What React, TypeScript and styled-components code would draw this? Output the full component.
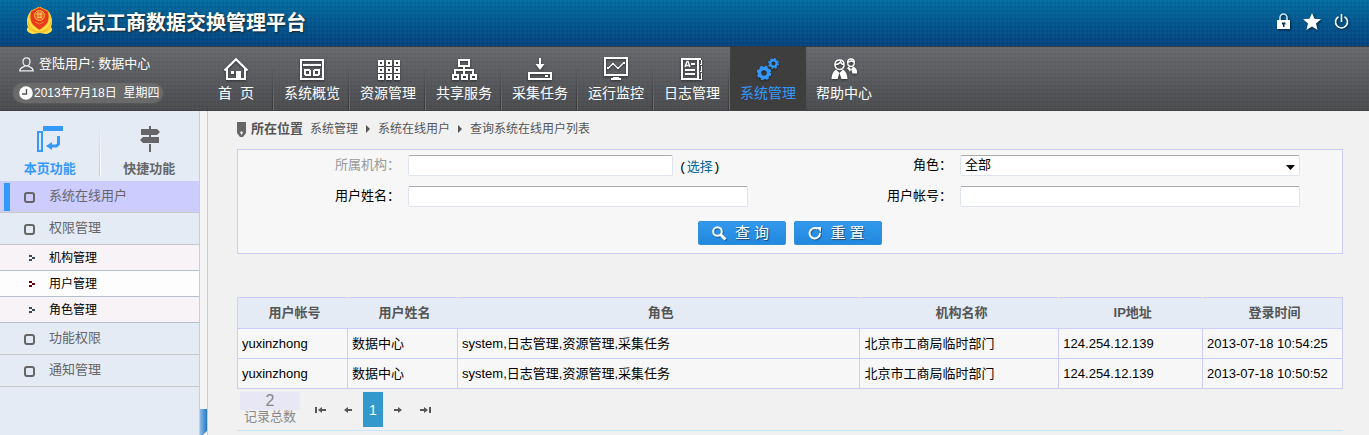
import React from "react";
import styled, { createGlobalStyle, css } from "styled-components";

const GlobalStyle = createGlobalStyle`
  *, *::before, *::after { box-sizing: border-box; }
  body {
    margin: 0;
    background: #f1f1f1;
    color: #000;
    font: 13px/20px "Liberation Sans", Arial, "Noto Sans CJK SC", sans-serif;
  }
  a { color: inherit; text-decoration: none; }
  button, input, select { font: inherit; margin: 0; }
  button { border: 0; padding: 0; background: none; color: inherit; cursor: pointer; }
  svg { display: block; flex: none; }
`;

const dots = css`
  linear-gradient(90deg, rgba(255, 255, 255, 0.02) 2px, transparent 2px) 0 0 / 4px 4px,
  linear-gradient(rgba(255, 255, 255, 0.02) 2px, transparent 2px) 0 0 / 4px 4px
`;

/* ---------- page frame ---------- */

const Page = styled.div`
  display: flex;
  flex-direction: column;
  min-height: 100vh;
`;

const Header = styled.header`
  display: flex;
  align-items: center;
  height: 47px;
  padding: 0 20px 4px 26px;
  border-bottom: 1px solid #38383c;
  background: ${dots}, linear-gradient(#00699d, #00407c);
`;

const Title = styled.h1`
  margin: 0 auto 0 13px;
  padding-top: 3px;
  color: #fff;
  font-size: 20px;
  line-height: 24px;
  font-weight: bold;
  text-shadow: 1px 1px 2px #222;
`;

const HeaderTools = styled.div`
  display: flex;
  gap: 13px;
  color: #fff;
  filter: drop-shadow(1px 1px 1px rgba(0, 0, 0, 0.6));
`;

const NavBar = styled.div`
  display: flex;
  height: 64px;
  background: ${dots}, linear-gradient(#646669, #47494c);
  border-bottom: 1px solid #444;
  color: #fff;
`;

const UserPanel = styled.div`
  width: 198px;
  flex: none;
  padding: 7px 0 0 13px;
`;

const UserLine = styled.div`
  display: flex;
  align-items: center;
  gap: 5px;
  height: 20px;
  padding-left: 6px;
`;

const DateLine = styled.div`
  display: flex;
  align-items: center;
  gap: 1px;
  width: 150px;
  height: 20px;
  margin-top: 9px;
  padding-left: 6px;
  border-radius: 10px;
  background: #6a6a6a;
  box-shadow: 0 0 2px #6a6a6a;
  font-size: 12px;
  white-space: pre;
`;

const Nav = styled.nav`
  display: flex;
`;

const NavItem = styled.a<{ $active?: boolean; $divider?: boolean }>`
  display: flex;
  flex-direction: column;
  align-items: center;
  gap: 2px;
  width: 76px;
  padding-top: 10px;
  font-size: 14px;
  white-space: pre;
  color: ${(p) => (p.$active ? "#3399ff" : "#fff")};
  background: ${(p) =>
    p.$active
      ? "#3e3e3e"
      : p.$divider
        ? "linear-gradient(rgba(58,58,58,0) 30%, #3a3a3a) right 1px top 0 / 1px 100% no-repeat, linear-gradient(rgba(112,112,112,0) 40%, #707070) right 0 top 0 / 1px 100% no-repeat"
        : "none"};
  svg { filter: drop-shadow(0 1px 1px rgba(0, 0, 0, 0.5)); }
`;

const Body = styled.div`
  display: flex;
  flex: 1;
`;

/* ---------- sidebar ---------- */

const Sidebar = styled.aside`
  width: 200px;
  flex: none;
  background: #e4ebf5;
  border-right: 1px solid #ccc;
`;

const SideTabs = styled.div`
  display: grid;
  grid-template-columns: 1fr 1fr;
  height: 70px;
`;

const SideTab = styled.button<{ $active?: boolean }>`
  display: flex;
  flex-direction: column;
  align-items: center;
  gap: 7px;
  padding-top: 15px;
  font-weight: bold;
  color: ${(p) => (p.$active ? "#3399ff" : "#666")};
  background: ${(p) =>
    p.$active
      ? "linear-gradient(#e4ebf5, #c8c8ee) right 0 top 10px / 1px 55px no-repeat"
      : "linear-gradient(#e4ebf5, #fff) left 0 top 10px / 1px 55px no-repeat"};
`;

const Menu = styled.ul`
  list-style: none;
  margin: 0;
  padding: 0;
`;

const MenuItem = styled.a<{ $active?: boolean }>`
  display: flex;
  align-items: center;
  gap: 14px;
  height: 32px;
  padding: 0 0 1px 24px;
  color: #666;
  border-bottom: 1px solid #c8c8c8;
  background: ${(p) =>
    p.$active
      ? "linear-gradient(#3399ff, #3399ff) left 4px top 2px / 6px 28px no-repeat, #ccccff"
      : "#e4ebf5"};
  &::before {
    content: "";
    width: 11px;
    height: 11px;
    margin-top: 3px;
    border: 2px solid #666;
    border-radius: 3px;
  }
`;

const SubItem = styled.a<{ $current?: boolean }>`
  display: flex;
  align-items: center;
  gap: 14px;
  height: 26px;
  padding-left: 29px;
  border-bottom: 1px solid #b5c0cc;
  font-size: 12px;
  background: ${(p) => (p.$current ? "#fdfdfd" : "#f8f3f7")};
  svg { fill: ${(p) => (p.$current ? "#660000" : "#334a66")}; }
`;

const Splitter = styled.div`
  display: flex;
  flex-direction: column;
  justify-content: flex-end;
  width: 8px;
  flex: none;
  background: #f4f4f4;
  border-right: 1px solid #ccc;
`;

const CollapseButton = styled.button`
  display: flex;
  align-items: flex-end;
  justify-content: flex-end;
  height: 26px;
  background: linear-gradient(90deg, #8cbbe6, #2277c4);
`;

/* ---------- main area ---------- */

const Main = styled.main`
  flex: 1;
  min-width: 0;
  padding: 8px 26px 4px 29px;
`;

const Breadcrumb = styled.nav`
  display: flex;
  align-items: center;
  gap: 7px;
  height: 20px;
  font-size: 12px;
  color: #555;
  strong { font-size: 13px; margin-left: -2px; }
`;

const SearchForm = styled.form`
  display: grid;
  grid-template-columns: 1fr 1fr;
  row-gap: 10px;
  margin-top: 10px;
  padding: 5px 0 8px;
  border: 1px solid #ccccff;
  background: #f7f7f7;
`;

const Field = styled.div`
  display: grid;
  grid-template-columns: 170px 1fr;
  padding-right: 42px;
  height: 21px;
`;

const Label = styled.label<{ $muted?: boolean }>`
  padding-right: 8px;
  text-align: right;
  line-height: 20px;
  color: ${(p) => (p.$muted ? "#999" : "#000")};
`;

const control = css`
  width: 100%;
  min-width: 0;
  height: 21px;
  border: 1px solid #dfe3ee;
  border-top-color: #aaa;
  border-radius: 2px;
  background: #fff;
  padding: 0 5px;
`;

const TextInput = styled.input`
  ${control}
`;

const WithPicker = styled.div`
  display: grid;
  grid-template-columns: 1fr 69px;
  column-gap: 6px;
  line-height: 24px;
  a { color: #006699; }
`;

const Paren = styled.span`
  font-family: "Liberation Mono", monospace;
`;

const SelectBox = styled.div`
  position: relative;
  svg {
    position: absolute;
    right: 5px;
    top: 10px;
    pointer-events: none;
  }
`;

const Select = styled.select`
  ${control}
  display: block;
  appearance: none;
  line-height: 18px;
  padding: 0 4px 2px;
  color: #000;
`;

const Actions = styled.div`
  grid-column: 1 / -1;
  display: flex;
  justify-content: center;
  gap: 8px;
  margin-top: 4px;
`;

const ActionButton = styled.button`
  display: flex;
  align-items: center;
  justify-content: center;
  gap: 8px;
  width: 88px;
  height: 24px;
  padding-right: 3px;
  border: 1px solid #2a92d8;
  border-radius: 2px;
  background: linear-gradient(#3399ee, #2288dd);
  color: #fff;
  font-size: 15px;
  text-shadow: 1px 1px 1px #246;
  svg { filter: drop-shadow(1px 1px 0 rgba(0, 40, 80, 0.5)); }
`;

const Table = styled.table`
  width: 100%;
  margin-top: 43px;
  table-layout: fixed;
  border-collapse: collapse;
  background: #f7f7f7;
  th, td {
    border: 1px solid #ccccff;
    padding: 0 4px;
    white-space: nowrap;
    overflow: hidden;
  }
  th {
    height: 31px;
    padding: 0 2px 0 6px;
    border-left-color: #e4ebf5;
    border-right-color: #e4ebf5;
    background: #e4ebf5;
    color: #555;
    font-weight: bold;
  }
  th:first-child { border-left-color: #ccccff; }
  th:last-child { border-right-color: #ccccff; }
  td { height: 30px; }
`;

const Col = styled.col<{ $w: string }>`
  width: ${(p) => p.$w};
`;

const Pager = styled.div`
  display: flex;
  align-items: flex-start;
  height: 42px;
  padding: 3px;
  border-bottom: 1px solid #c5e5ff;
  color: #888;
`;

const Total = styled.div`
  width: 60px;
  text-align: center;
`;

const TotalCount = styled.div`
  height: 18px;
  background: #e7e7f5;
  font-size: 16px;
  line-height: 18px;
`;

const TotalLabel = styled.div`
  height: 14px;
  line-height: 14px;
`;

const PageButton = styled.button<{ $current?: boolean }>`
  display: flex;
  align-items: center;
  justify-content: center;
  width: 26px;
  height: 35px;
  color: #555;
  ${(p) =>
    p.$current &&
    css`
      width: 20px;
      margin: 0 3px;
      background: #3399cc;
      color: #fff;
      font-size: 14px;
    `}
`;

const PageGroup = styled.div`
  display: flex;
  margin-left: 8px;
`;

/* ---------- drawings ---------- */

const Emblem = () => (
  <svg width="27" height="28" viewBox="0 0 27 28" aria-hidden="true">
    <path d="M4 5C1 9 0 16 2 20c-2 2-1 5 2 6 3 2 6 0 9.500 0 3.500 0 6.500 2 9.500 0 3-1 4-4 2-6 2-4 1-11-2-15z" fill="#ffe14a" />
    <path d="M2 20c3 4 7 5 11.500 5S22 24 25 20M1.500 14c1 4 4 8 8 10M25.500 14c-1 4-4 8-8 10" fill="none" stroke="#f5ae10" />
    <path d="M5 4C8 3 11 1 13.500 0 16 1 19 3 22 4c1.500 4 1.500 8-.5 12-2 3-5 5-8 7-3-2-6-4-8-7C3.500 12 3.500 8 5 4z" fill="#e8391c" stroke="#ffb02e" />
    <circle cx="13.500" cy="8.500" r="5" fill="#f0602c" stroke="#ffb63c" />
    <path d="M10.500 7h6M11 10.500h5M12 5v6M15 5v6" stroke="#ffc85a" fill="none" />
    <path d="M9 15l4.500 2 4.500-2" stroke="#f58a2e" fill="none" />
  </svg>
);

const LockIcon = () => (
  <svg width="13" height="17" viewBox="0 0 13 17">
    <path d="M3 8V4.500a3.500 3.500 0 0 1 7 0V8" fill="none" stroke="#cfe6f5" strokeWidth="1.600" />
    <path fillRule="evenodd" d="M0 7h13v9H0zM5 9.500v2h1V14h1.500v-2.500h1v-2z" fill="#fff" />
  </svg>
);

const StarIcon = () => (
  <svg width="18" height="17" viewBox="0 0 18 17">
    <path d="M9 0l2.500 5.800 6.500.5-5 4.200 1.600 6.500L9 13.500 3.400 17 5 10.500 0 6.300l6.500-.5z" fill="#fff" />
  </svg>
);

const PowerIcon = () => (
  <svg width="15" height="17" viewBox="0 0 15 17">
    <path d="M4.500 3.800a6 6 0 1 0 6 0M7.500 1v8" fill="none" stroke="#fff" strokeWidth="1.600" />
  </svg>
);

const UserIcon = () => (
  <svg width="15" height="15" viewBox="0 0 15 15" fill="none" stroke="#eee" strokeWidth="1.300">
    <path d="M7.500.8c2.200 0 3.500 1.500 3.500 3.700S9.700 9 7.500 9 4 6.700 4 4.500 5.300.8 7.500.8zM5.800 8.800C4.500 10.500 1 10 .8 13.800h13.400C14 10 10.500 10.500 9.200 8.800" />
  </svg>
);

const ClockIcon = () => (
  <svg width="14" height="14" viewBox="0 0 14 14">
    <circle cx="7" cy="7" r="6.800" fill="#fff" />
    <path d="M7.500 3v5H3" fill="none" stroke="#555" strokeWidth="1.400" />
  </svg>
);

const NavIcon = ({ children }: { children: React.ReactNode }) => (
  <svg width="26" height="24" viewBox="0 0 26 24" fill="none" stroke="currentColor" strokeWidth="2">
    {children}
  </svg>
);

const HomeIcon = () => (
  <NavIcon>
    <path d="M1.500 13.500L13 2.200l11.500 11.300" strokeWidth="2.200" />
    <path d="M4 11v11h18V11" />
    <path d="M13 14h5v8h-5zM8 14h3v3H8z" fill="currentColor" stroke="none" />
  </NavIcon>
);

const OverviewIcon = () => (
  <NavIcon>
    <g shapeRendering="crispEdges">
      <path d="M2 3h22v19H2zM4 8h18" />
      <path d="M5.500 12.500h5v5h-5zM15.500 12.500h5v5h-5z" strokeWidth="1" />
      <path d="M6.500 13.500h5v5h-5zM14.500 13.500h5v5h-5z" strokeWidth="1" />
    </g>
  </NavIcon>
);

const GridIcon = () => (
  <NavIcon>
    <g shapeRendering="crispEdges">
      {[4, 11, 18].map((y) => [4, 12, 20].map((x) => <rect key={`${x}-${y}`} x={x} y={y} width="4" height="4" />))}
    </g>
  </NavIcon>
);

const ShareIcon = () => (
  <NavIcon>
    <g shapeRendering="crispEdges">
      <path d="M8 3h10v6H8zM2 18h5v4H2zM11 18h5v4h-5zM20 18h5v4h-5z" />
      <path d="M13 9v8M4 17v-4h18v4" />
    </g>
  </NavIcon>
);

const CollectIcon = () => (
  <NavIcon>
    <path d="M2 16h22v6H2z" shapeRendering="crispEdges" />
    <path d="M13 1v6" />
    <path d="M8.500 7h9L13 13zM18 18h3v2h-3z" fill="currentColor" stroke="none" />
  </NavIcon>
);

const MonitorIcon = () => (
  <NavIcon>
    <path d="M2 1h22v17H2z" shapeRendering="crispEdges" />
    <path d="M5 11.500l5-5 5 5 6-6" strokeWidth="1.200" />
    <path d="M4 10h2v2H4zM9 6h2v2H9zM14 10h2v2h-2zM20 5h2v2h-2zM10 20h6v1h2v2H8v-2h2z" fill="currentColor" stroke="none" />
  </NavIcon>
);

const LogIcon = () => (
  <NavIcon>
    <g shapeRendering="crispEdges">
      <path d="M22 2H3v20h16V2" />
      <path d="M22.500 3v4h-2M22.500 9v5h-2M22.500 16v6h-3" strokeWidth="1" />
      <path d="M12 7h4M6 13h10M6 17h10" />
    </g>
    <path d="M6 10l2-5.500h1l2 5.500M7 8.500h3" strokeWidth="1.400" />
  </NavIcon>
);

const GearsIcon = () => (
  <NavIcon>
    <circle cx="9" cy="16" r="4.500" strokeWidth="3.400" />
    <circle cx="9" cy="16" r="6.500" strokeWidth="1.600" strokeDasharray="2.900 2.205" />
    <circle cx="18.500" cy="6.500" r="3.200" strokeWidth="2.400" />
    <circle cx="18.500" cy="6.500" r="4.800" strokeWidth="1.300" strokeDasharray="2.100 1.670" />
  </NavIcon>
);

const PeopleIcon = () => (
  <NavIcon>
    <path d="M20 2c2.200 0 3.300 1.300 3.300 3.500S22 9.500 20 9.500s-3.300-1.800-3.300-4S17.800 2 20 2zM17 5c2 0 3-.8 3.500-1.500.5 1 1.500 1.500 2.500 1.500" strokeWidth="1.400" />
    <path d="M17.500 9.500L20 12l2.500-2.500c2 1 3.500 2.500 4 7h-5L20 12l-1 3c-.5-1.500-2-3-3-3.500z" fill="currentColor" stroke="none" />
    <path d="M8.500 3c3 0 4.500 1.700 4.500 4.500s-1.500 5-4.500 5S4 10.300 4 7.500 5.500 3 8.500 3zM4.500 7.500c2.500 0 4-1.200 5-2.500.5 1.500 2 2.500 3.500 2.500" strokeWidth="1.600" />
    <path d="M5 12.500L8.500 16 12 12.500c2.500 1.500 4.300 4.500 4.500 9.500h-6l-2-6-2 6h-6c.2-5 2-8 4.500-9.500z" fill="currentColor" stroke="none" />
  </NavIcon>
);

const PageFunctionIcon = () => (
  <svg width="26" height="26" viewBox="0 0 26 26" fill="none" stroke="#3399ff">
    <path d="M6 0h20v5H6z" fill="#3399ff" stroke="none" />
    <path d="M1 6h4v19H1z" strokeWidth="2" />
    <path d="M21.500 10v8l-2 2H14" strokeWidth="3" />
    <path d="M15 16v8l-6-4z" fill="#3399ff" stroke="none" />
  </svg>
);

const SignpostIcon = () => (
  <svg width="26" height="26" viewBox="0 0 26 26">
    <path d="M13 0h2v26h-2z" fill="#666" />
    <path d="M3 15h22v3H3z" fill="#e4ebf5" />
    <path d="M5 3h16l3 3-3 3H5zM23 11H7l-3 3 3 3h16z" fill="#666" />
  </svg>
);

const SubMarker = () => (
  <svg width="6" height="6" viewBox="0 0 6 6" shapeRendering="crispEdges">
    <path d="M0 0h3v2h3v2H3v2H0V4h3V2H0z" />
  </svg>
);

const PinIcon = () => (
  <svg width="9" height="15" viewBox="0 0 9 15">
    <path fillRule="evenodd" d="M0 0h9v11l-3 4H3l-3-4zM3 10.500l1.500 2.500L6 10.500 4.500 9z" fill="#666" />
  </svg>
);

const CrumbArrow = () => (
  <svg width="6" height="8" viewBox="0 0 6 8">
    <path d="M1 0l4 4-4 4z" fill="#555" />
  </svg>
);

const SearchIcon = () => (
  <svg width="15" height="15" viewBox="0 0 15 15" fill="none" stroke="#fff">
    <circle cx="5.500" cy="5.500" r="4.300" strokeWidth="2" />
    <path d="M8.500 8.500l5 5" strokeWidth="3" />
  </svg>
);

const ResetIcon = () => (
  <svg width="14" height="14" viewBox="0 0 14 14">
    <path d="M9.500 2.800A5.200 5.200 0 1 0 12 7" fill="none" stroke="#fff" strokeWidth="2" />
    <path d="M8 1h5v5z" fill="#fff" />
  </svg>
);

const PageArrow = ({ flip, bar }: { flip?: boolean; bar?: boolean }) => (
  <svg width="12" height="8" viewBox="0 0 12 8">
    <g transform={flip ? "matrix(-1 0 0 1 12 0)" : undefined} fill="#555">
      {bar && <path d="M0 1h2v6H0z" />}
      <path d="M3 4l4-3v2h4v2H7v2z" />
    </g>
  </svg>
);

/* ---------- data ---------- */

const navItems = [
  { label: "首\u00a0\u00a0页", Icon: HomeIcon },
  { label: "系统概览", Icon: OverviewIcon },
  { label: "资源管理", Icon: GridIcon },
  { label: "共享服务", Icon: ShareIcon },
  { label: "采集任务", Icon: CollectIcon },
  { label: "运行监控", Icon: MonitorIcon },
  { label: "日志管理", Icon: LogIcon },
  { label: "系统管理", Icon: GearsIcon, active: true },
  { label: "帮助中心", Icon: PeopleIcon },
];

const menu = [
  { label: "系统在线用户", active: true },
  { label: "权限管理", children: ["机构管理", "用户管理", "角色管理"] },
  { label: "功能权限" },
  { label: "通知管理" },
];

const columns = [
  { title: "用户帐号", width: "110px" },
  { title: "用户姓名", width: "110px" },
  { title: "角色", width: "auto" },
  { title: "机构名称", width: "18%" },
  { title: "IP地址", width: "13%" },
  { title: "登录时间", width: "140px" },
];

const rows = ["2013-07-18 10:54:25", "2013-07-18 10:50:52"].map((time) => [
  "yuxinzhong",
  "数据中心",
  "system,日志管理,资源管理,采集任务",
  "北京市工商局临时部门",
  "124.254.12.139",
  time,
]);

export default function App() {
  return (
    <Page>
      <GlobalStyle />
      <Header>
        <Emblem />
        <Title>北京工商数据交换管理平台</Title>
        <HeaderTools>
          <button aria-label="锁定"><LockIcon /></button>
          <button aria-label="收藏"><StarIcon /></button>
          <button aria-label="退出"><PowerIcon /></button>
        </HeaderTools>
      </Header>
      <NavBar>
        <UserPanel>
          <UserLine>
            <UserIcon />
            <span>登陆用户: 数据中心</span>
          </UserLine>
          <DateLine>
            <ClockIcon />
            <span>{"2013年7月18日\u00a0\u00a0星期四"}</span>
          </DateLine>
        </UserPanel>
        <Nav>
          {navItems.map(({ label, Icon, active }, i) => (
            <NavItem key={label} href="#" $active={active} $divider={i < navItems.length - 1}>
              <Icon />
              {label}
            </NavItem>
          ))}
        </Nav>
      </NavBar>
      <Body>
        <Sidebar>
          <SideTabs>
            <SideTab $active>
              <PageFunctionIcon />
              本页功能
            </SideTab>
            <SideTab>
              <SignpostIcon />
              快捷功能
            </SideTab>
          </SideTabs>
          <Menu>
            {menu.map((item) => (
              <li key={item.label}>
                <MenuItem href="#" $active={item.active}>{item.label}</MenuItem>
                {item.children && (
                  <Menu>
                    {item.children.map((child) => (
                      <li key={child}>
                        <SubItem href="#" $current={child === "用户管理"}>
                          <SubMarker />
                          {child}
                        </SubItem>
                      </li>
                    ))}
                  </Menu>
                )}
              </li>
            ))}
          </Menu>
        </Sidebar>
        <Splitter>
          <CollapseButton aria-label="收起侧栏">
            <svg width="4" height="4" viewBox="0 0 4 4"><path d="M4 0v4H0z" fill="#fff" /></svg>
          </CollapseButton>
        </Splitter>
        <Main>
          <Breadcrumb>
            <PinIcon />
            <strong>所在位置</strong>
            <a href="#">系统管理</a>
            <CrumbArrow />
            <a href="#">系统在线用户</a>
            <CrumbArrow />
            <a href="#">查询系统在线用户列表</a>
          </Breadcrumb>
          <SearchForm onSubmit={(e) => e.preventDefault()}>
            <Field>
              <Label htmlFor="org" $muted>所属机构：</Label>
              <WithPicker>
                <TextInput id="org" />
                <span><Paren>(</Paren><a href="#">选择</a><Paren>)</Paren></span>
              </WithPicker>
            </Field>
            <Field>
              <Label htmlFor="role">角色：</Label>
              <SelectBox>
                <Select id="role">
                  <option>全部</option>
                </Select>
                <svg width="9" height="5" viewBox="0 0 9 5"><path d="M0 0h9L4.500 5z" /></svg>
              </SelectBox>
            </Field>
            <Field>
              <Label htmlFor="name">用户姓名：</Label>
              <TextInput id="name" />
            </Field>
            <Field>
              <Label htmlFor="account">用户帐号：</Label>
              <TextInput id="account" />
            </Field>
            <Actions>
              <ActionButton type="submit"><SearchIcon />查 询</ActionButton>
              <ActionButton type="reset"><ResetIcon />重 置</ActionButton>
            </Actions>
          </SearchForm>
          <Table>
            <colgroup>
              {columns.map((c) => <Col key={c.title} $w={c.width} />)}
            </colgroup>
            <thead>
              <tr>{columns.map((c) => <th key={c.title} scope="col">{c.title}</th>)}</tr>
            </thead>
            <tbody>
              {rows.map((row) => (
                <tr key={row[5]}>{row.map((cell) => <td key={cell}>{cell}</td>)}</tr>
              ))}
            </tbody>
          </Table>
          <Pager>
            <Total>
              <TotalCount>2</TotalCount>
              <TotalLabel>记录总数</TotalLabel>
            </Total>
            <PageGroup>
              <PageButton aria-label="首页"><PageArrow bar /></PageButton>
              <PageButton aria-label="上一页"><PageArrow /></PageButton>
              <PageButton $current>1</PageButton>
              <PageButton aria-label="下一页"><PageArrow flip /></PageButton>
              <PageButton aria-label="末页"><PageArrow flip bar /></PageButton>
            </PageGroup>
          </Pager>
        </Main>
      </Body>
    </Page>
  );
}
